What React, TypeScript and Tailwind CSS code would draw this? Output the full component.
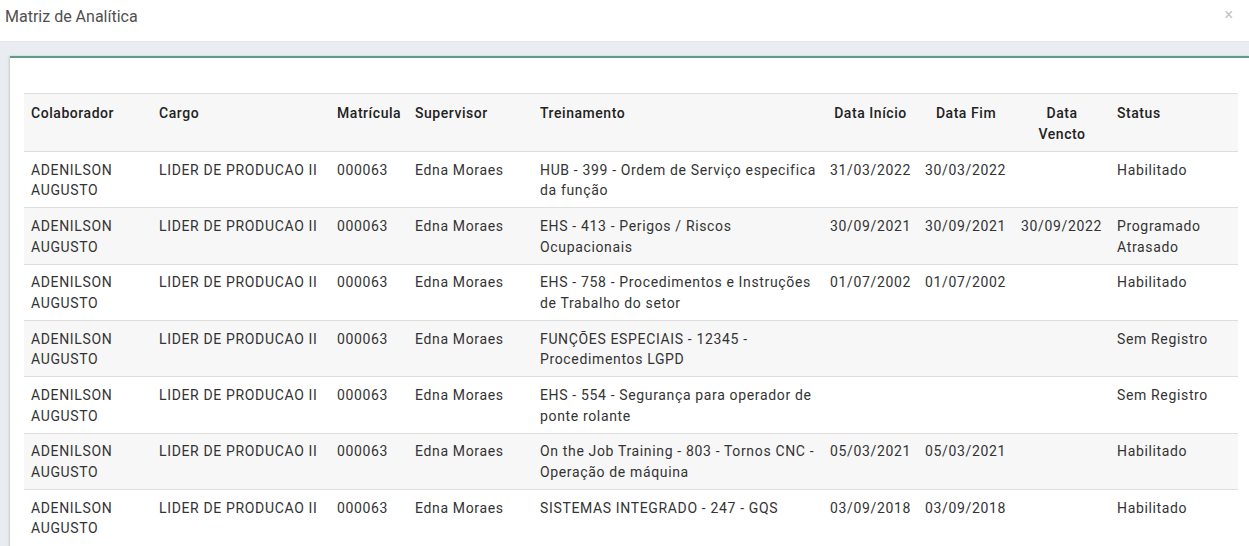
import React from "react";

type Row = {
  nome: string;
  treinamento: string;
  inicio: string;
  fim: string;
  vencto: string;
  status: string;
};

const rows: Row[] = [
  { nome: "ADENILSON AUGUSTO", treinamento: "HUB - 399 - Ordem de Serviço especifica da função", inicio: "31/03/2022", fim: "30/03/2022", vencto: "", status: "Habilitado" },
  { nome: "ADENILSON AUGUSTO", treinamento: "EHS - 413 - Perigos / Riscos Ocupacionais", inicio: "30/09/2021", fim: "30/09/2021", vencto: "30/09/2022", status: "Programado Atrasado" },
  { nome: "ADENILSON AUGUSTO", treinamento: "EHS - 758 - Procedimentos e Instruções de Trabalho do setor", inicio: "01/07/2002", fim: "01/07/2002", vencto: "", status: "Habilitado" },
  { nome: "ADENILSON AUGUSTO", treinamento: "FUNÇÕES ESPECIAIS - 12345 - Procedimentos LGPD", inicio: "", fim: "", vencto: "", status: "Sem Registro" },
  { nome: "ADENILSON AUGUSTO", treinamento: "EHS - 554 - Segurança para operador de ponte rolante", inicio: "", fim: "", vencto: "", status: "Sem Registro" },
  { nome: "ADENILSON AUGUSTO", treinamento: "On the Job Training - 803 - Tornos CNC - Operação de máquina", inicio: "05/03/2021", fim: "05/03/2021", vencto: "", status: "Habilitado" },
  { nome: "ADENILSON AUGUSTO", treinamento: "SISTEMAS INTEGRADO - 247 - GQS", inicio: "03/09/2018", fim: "03/09/2018", vencto: "", status: "Habilitado" },
];

export default function App() {
  return (
    <div
      className="w-[1249px] h-[546px] overflow-hidden bg-white"
      style={{ fontFamily: "Roboto, 'Liberation Sans', sans-serif" }}
    >
      <div className="h-[42px] flex items-center justify-between pl-[5px] pr-[16px] border-b border-[#e3e6ea]">
        <span className="text-[16px] text-[#505050] -mt-[8px]">Matriz de Analítica</span>
        <span className="text-[16px] text-[#c4c4c4] -mt-[12px]">×</span>
      </div>
      <div className="bg-[#e9ecf0] pt-[14px] pl-[10px] h-[600px]">
        <div className="bg-white border-t-2 border-[#5f9c84] h-full pt-[35px] pl-[14px] pr-[11px] shadow-[-1px_0_2px_rgba(0,0,0,0.15)]">
          <table className="table-fixed w-[1214px] border-collapse text-[14px] text-[#333]">
            <colgroup>
              <col className="w-[128px]" />
              <col className="w-[178px]" />
              <col className="w-[78px]" />
              <col className="w-[125px]" />
              <col className="w-[290px]" />
              <col className="w-[95px]" />
              <col className="w-[96px]" />
              <col className="w-[96px]" />
              <col className="w-[128px]" />
            </colgroup>
            <thead>
              <tr className="bg-[#f7f7f7] border-t border-[#dedede] text-[#222] font-medium leading-[21px] tracking-[0.55px]">
                <th className="text-left align-top px-[7px] pt-[9px] pb-[6px] font-medium">Colaborador</th>
                <th className="text-left align-top px-[7px] pt-[9px] pb-[6px] font-medium">Cargo</th>
                <th className="text-left align-top px-[7px] pt-[9px] pb-[6px] font-medium whitespace-nowrap">Matrícula</th>
                <th className="text-left align-top px-[7px] pt-[9px] pb-[6px] font-medium">Supervisor</th>
                <th className="text-left align-top px-[7px] pt-[9px] pb-[6px] font-medium">Treinamento</th>
                <th className="text-center align-top px-[7px] pt-[9px] pb-[6px] font-medium whitespace-nowrap">Data Início</th>
                <th className="text-center align-top px-[7px] pt-[9px] pb-[6px] font-medium">Data Fim</th>
                <th className="text-center align-top px-[7px] pt-[9px] pb-[6px] font-medium">Data<br />Vencto</th>
                <th className="text-left align-top px-[7px] pt-[9px] pb-[6px] font-medium">Status</th>
              </tr>
            </thead>
            <tbody>
              {rows.map((r, i) => (
                <tr
                  key={i}
                  className={`border-t border-[#dedede] leading-[20.67px] tracking-[0.65px] ${i % 2 === 1 ? "bg-[#f7f7f7]" : "bg-white"}`}
                >
                  <td className="align-top px-[7px] pt-[7.5px] pb-[6.5px]">{r.nome}</td>
                  <td className="align-top px-[7px] pt-[7.5px] pb-[6.5px] whitespace-nowrap">LIDER DE PRODUCAO II</td>
                  <td className="align-top px-[7px] pt-[7.5px] pb-[6.5px]">000063</td>
                  <td className="align-top px-[7px] pt-[7.5px] pb-[6.5px]">Edna Moraes</td>
                  <td className="align-top px-[7px] pt-[7.5px] pb-[6.5px]">{r.treinamento}</td>
                  <td className="align-top px-[7px] pt-[7.5px] pb-[6.5px] whitespace-nowrap">{r.inicio}</td>
                  <td className="align-top px-[7px] pt-[7.5px] pb-[6.5px] whitespace-nowrap">{r.fim}</td>
                  <td className="align-top px-[7px] pt-[7.5px] pb-[6.5px] whitespace-nowrap">{r.vencto}</td>
                  <td className="align-top px-[7px] pt-[7.5px] pb-[6.5px]">{r.status}</td>
                </tr>
              ))}
            </tbody>
          </table>
        </div>
      </div>
    </div>
  );
}
